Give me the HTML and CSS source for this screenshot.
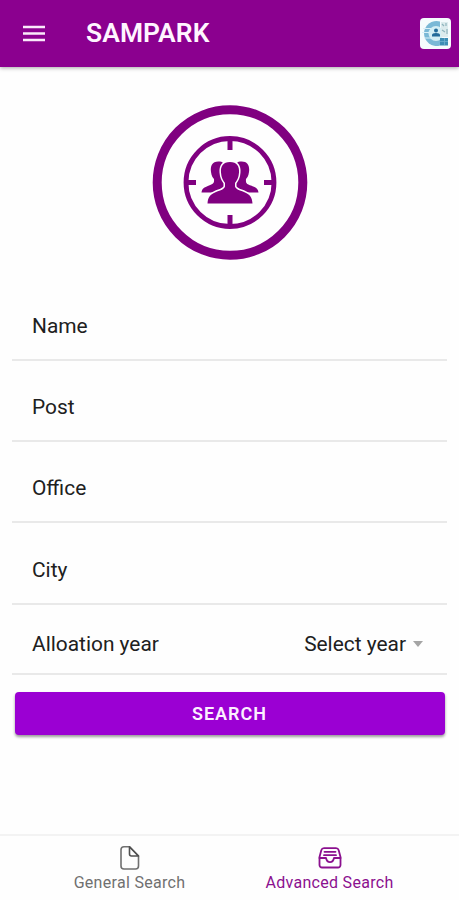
FILE: index.html
```
<!DOCTYPE html>
<html lang="en">
<head>
    <meta charset="UTF-8">
    <meta name="viewport" content="width=device-width, initial-scale=1.0">
    <title>SAMPARK</title>
    <link rel="stylesheet" href="styles.css">
</head>
<body>
    <header class="toolbar">
        <button class="menu-button" aria-label="Menu">
            <svg width="24" height="18" viewBox="0 0 24 18">
                <path d="M1 2h22M1 8.500h22M1 15h22" stroke="#fbe9fb" stroke-width="2.600"/>
            </svg>
        </button>
        <h1>SAMPARK</h1>
        <svg class="brand" width="31" height="31" viewBox="0 0 31 31">
            <rect width="31" height="31" rx="4" fill="#f5fbfd"/>
            <path d="M20 3.500A12.500 12.500 0 1 0 20 27.500z" fill="#7ab8d6"/>
            <circle cx="16" cy="15.500" r="7.500" fill="#d3eef5"/>
            <path d="M3 10.500h8M2 14.500h7M4 20h8" stroke="#d9f0f8" stroke-width="1"/>
            <circle cx="16" cy="12.500" r="2" fill="#236b9a"/>
            <path d="M12 18.500v-1.500q0-2 4-2t4 2v1.500z" fill="#236b9a"/>
            <path d="M21 4h7v15h-7z" fill="#dcebed"/>
            <path d="M22 6l2 2M26 5v3M22 12l3 2M27 11v5" stroke="#8fb4bd" stroke-width="1.200"/>
            <path d="M20 20h8v7.500h-8z" fill="#3d8db5"/>
            <path d="M20 23.500h8M24.500 20v7" stroke="#6fb0cf" stroke-width=".8"/>
        </svg>
    </header>

    <main class="content">
        <svg class="logo" width="156" height="156" viewBox="0 0 156 156" fill="none" stroke="#800080">
            <circle cx="78" cy="77.500" r="72.800" stroke-width="9"/>
            <circle cx="78" cy="77.500" r="44" stroke-width="4.800"/>
            <path d="M78 34v11M78 110v11M34 77.500h10M112 77.500h10" stroke-width="5"/>
            <!-- people at the back -->
            <g fill="#800080" stroke="none">
                <path d="M70 57c-9-2-12 3-11 10 .5 4 2 6 3 7 .5 5-1.500 5-5 6.500-5 2-7 3-7.500 7h14c3-2.500 6-3 9.500-5V60z"/>
                <path d="M86 57c9-2 12 3 11 10-.5 4-2 6-3 7-.5 5 1.500 5 5 6.500 5 2 7 3 7.500 7h-14c-3-2.500-6-3-9.500-5V60z"/>
            </g>
            <path d="M78 57c7 0 9.500 4.500 9 10.500-.3 5-2 8-4 10.500v3.500c1 3 4 3.500 9 5.500 6 2.500 8 5 8.500 11.500H55.500c.5-6.500 2.500-9 8.500-11.500 5-2 8-2.500 9-5.500v-3.500c-2-2.500-3.700-5.500-4-10.500C68.500 61.500 71 57 78 57z" fill="#800080" stroke="#fff" stroke-width="3" paint-order="stroke"/>
        </svg>

        <form class="search-form">
            <div class="row"><label>Name</label></div>
            <div class="row"><label>Post</label></div>
            <div class="row"><label>Office</label></div>
            <div class="row row-tall"><label>City</label></div>
            <div class="row row-select">
                <label>Alloation year</label>
                <div class="select">
                    <span>Select year</span>
                    <span class="arrow"></span>
                </div>
            </div>
            <button type="button" class="search-button">SEARCH</button>
        </form>
    </main>

    <nav class="tabs">
        <a class="tab">
            <svg width="22" height="26" viewBox="0 0 22 26" fill="none" stroke="#707070" stroke-width="1.600" stroke-linejoin="round">
                <path d="M10.500 1.800H5a3 3 0 0 0-3 3V21a3 3 0 0 0 3 3h11.500a3 3 0 0 0 3-3V11z"/>
                <path d="M10.500 1.800V9a2 2 0 0 0 2 2h7z" stroke="#505050"/>
            </svg>
            <span>General Search</span>
        </a>
        <a class="tab active">
            <svg width="26" height="26" viewBox="0 0 26 26" fill="none" stroke="#8b108f" stroke-width="1.800" stroke-linejoin="round" stroke-linecap="round">
                <path d="M2.500 12L4.300 5.200Q4.900 3.200 7 3.200h12q2.100 0 2.700 2L23.500 12V20a2.500 2.500 0 0 1-2.500 2.500h-16A2.500 2.500 0 0 1 2.500 20z"/>
                <path d="M2.500 13h6.500c.5 2.500 2 4.200 4 4.200s3.500-1.700 4-4.200h6.500M7.500 6.800h11M7 10.200h12"/>
            </svg>
            <span>Advanced Search</span>
        </a>
    </nav>
</body>
</html>
```
FILE: styles.css
```
* {
    box-sizing: border-box;
}

body {
    display: flex;
    flex-direction: column;
    height: 900px;
    margin: 0;
    background: #fefefe;
    color: #202020;
    font-family: Roboto, sans-serif;
    font-size: 20.9px;
}

.toolbar {
    display: flex;
    align-items: center;
    height: 67px;
    padding: 0 8px 0 22px;
    background: #8b008f;
    box-shadow: 0 1px 4px rgba(0, 0, 0, 0.35);
}

.menu-button {
    display: flex;
    padding: 0;
    border: none;
    background: none;
}

.toolbar h1 {
    flex: 1;
    margin: 0 0 2px 40px;
    color: #fff5ff;
    font-size: 26.4px;
    font-weight: 600;
    line-height: 30px;
    letter-spacing: 0.1px;
}

.content {
    flex: 1;
    padding: 38px 12px 0;
}

.logo {
    display: block;
    margin: 0 auto 19px;
}

.row {
    display: flex;
    align-items: flex-end;
    height: 81px;
    padding: 0 20px 21px;
    border-bottom: 2px solid #e9e9e9;
    line-height: 24px;
}

.row-tall {
    height: 82px;
}

.row-select {
    justify-content: space-between;
    height: 70px;
    padding-bottom: 17px;
}

.select {
    display: flex;
    align-items: center;
    gap: 7px;
    padding-right: 4px;
}

.arrow {
    border-left: 5.5px solid transparent;
    border-right: 5.5px solid transparent;
    border-top: 6px solid #a5a5a5;
}

.search-button {
    display: block;
    width: 430px;
    height: 43px;
    margin: 17px auto 0;
    padding: 0 0 1px;
    border: none;
    border-radius: 4px;
    background: #9b00d3;
    box-shadow: 0 2px 3px rgba(0, 0, 0, 0.4);
    color: #fcefff;
    font-family: inherit;
    font-size: 18px;
    font-weight: 600;
    letter-spacing: 1px;
}

.tabs {
    display: flex;
    justify-content: center;
    height: 66px;
    border-top: 2px solid #f3f3f3;
}

.tab {
    display: flex;
    flex-direction: column;
    align-items: center;
    width: 200px;
    padding-top: 9px;
    color: #707070;
    font-size: 16px;
    line-height: 23px;
    letter-spacing: 0.3px;
}

.active {
    color: #8b108f;
}
```
